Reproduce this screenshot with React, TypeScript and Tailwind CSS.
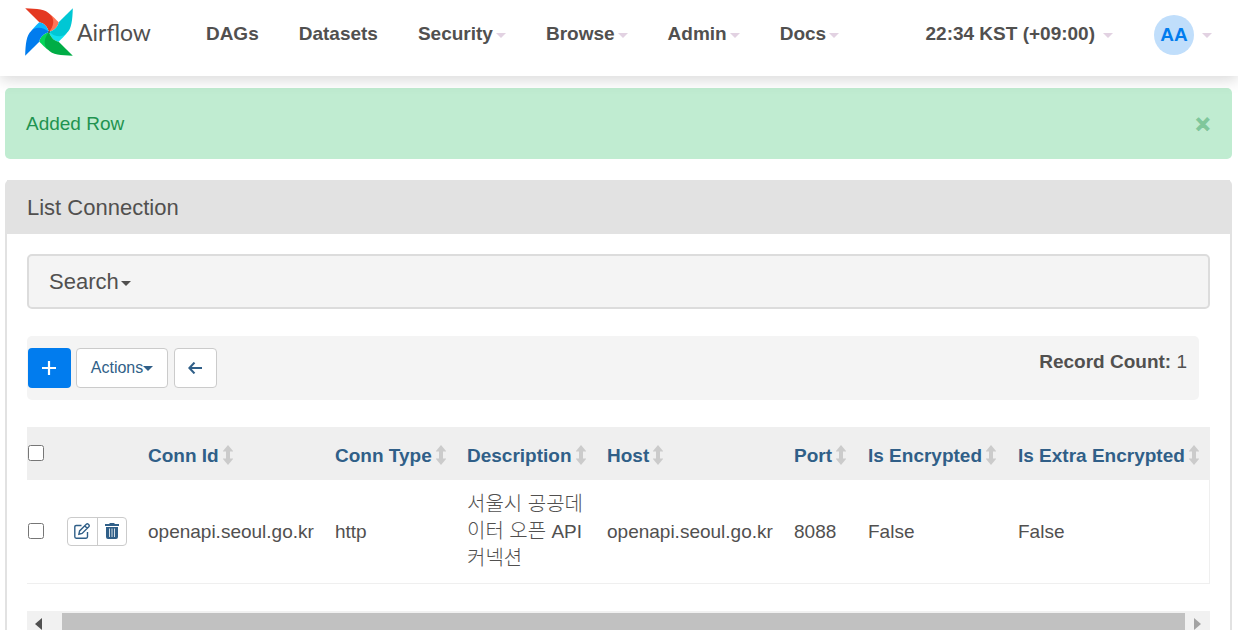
import type { ReactNode } from "react";

const navItems = [
  { label: "DAGs", menu: false },
  { label: "Datasets", menu: false },
  { label: "Security", menu: true },
  { label: "Browse", menu: true },
  { label: "Admin", menu: true },
  { label: "Docs", menu: true },
];

const columns = [
  "Conn Id",
  "Conn Type",
  "Description",
  "Host",
  "Port",
  "Is Encrypted",
  "Is Extra Encrypted",
];

const blades = [
  { angle: 0, main: "#e43921", light: "#ff7557" },
  { angle: 90, main: "#00c7d4", light: "#11e1ee" },
  { angle: 180, main: "#00ad46", light: "#04d659" },
  { angle: 270, main: "#017cee", light: "#0cb6ff" },
];

const Caret = ({ className = "" }: { className?: string }) => (
  <svg
    viewBox="0 0 10 5"
    className={`h-[5px] w-[10px] shrink-0 fill-current ${className}`}
    aria-hidden="true"
  >
    <path d="M0 0h10L5 5z" />
  </svg>
);

const Pinwheel = () => (
  <svg viewBox="-24 -24 48 48" className="size-12" aria-hidden="true">
    {blades.map((b) => (
      <g key={b.angle} transform={`rotate(${b.angle})`}>
        <path
          fill={b.light}
          d="M1-17.8C4-15.5 7-12.5 9.7-9.7C9-5 5-1.5 0 0C3-6 4-12 1-17.8Z"
        />
        <path
          fill={b.main}
          d="M-23.8-23.8C-12-23.5-3-22.5 1-17.8C6-13 5-6 0 0C-1.5-5-5-9-9.7-9.7Z"
        />
      </g>
    ))}
    <circle r="1" fill="#51504f" />
  </svg>
);

const SortIcon = () => (
  <svg
    viewBox="0 0 10 20"
    className="h-5 w-[10px] shrink-0 fill-[#cbcbcb]"
    aria-hidden="true"
  >
    <path d="M5 0l5.4 6.4H7v7.2h3.4L5 20l-5.4-6.4H3V6.4H-.4z" />
  </svg>
);

const PlusIcon = () => (
  <svg viewBox="0 0 14 14" className="size-[14px]" aria-hidden="true">
    <path d="M7 0v14M0 7h14" stroke="currentColor" strokeWidth="2.2" />
  </svg>
);

const BackIcon = () => (
  <svg viewBox="0 0 14 12" className="h-3 w-[14px]" aria-hidden="true">
    <path
      d="M6.5.6L1.4 6l5.1 5.4M1.4 6H14"
      fill="none"
      stroke="currentColor"
      strokeWidth="2.1"
    />
  </svg>
);

const EditIcon = () => (
  <svg viewBox="0 0 16 16" className="size-4" aria-hidden="true">
    <g fill="none" stroke="currentColor" strokeWidth="1.4">
      <path d="M7.5 2.5H2.2Q.8 2.5.8 3.9v9.9q0 1.4 1.4 1.4h9.9q1.4 0 1.4-1.4V9" />
      <path d="M4.9 11.2l.7-3.3 6.7-6.7q1-.9 2 0l.5.5q.9 1 0 2L8.1 10.4zM10.7 2.8l2.5 2.5" />
    </g>
  </svg>
);

const TrashIcon = () => (
  <svg viewBox="0 0 14 16" className="h-4 w-[14px]" aria-hidden="true">
    <path
      fill="currentColor"
      d="M0 1h4.5V0h5v1H14v2H0zM1 4h12v10q0 2-2 2H3q-2 0-2-2z"
    />
    <path
      d="M4.5 5.5v8.5M7 5.5v8.5M9.5 5.5v8.5"
      stroke="#fff"
      strokeWidth="0.8"
    />
  </svg>
);

const Cell = ({ children }: { children: ReactNode }) => (
  <td className="px-[10px] align-middle whitespace-nowrap">{children}</td>
);

const Navbar = () => (
  <header className="relative z-10 flex h-[76px] shrink-0 items-start bg-white pr-[26px] pl-[25px] font-bold shadow-[0_4px_14px_rgba(0,0,0,0.15)]">
    <a href="#home" className="flex items-center pt-2">
      <Pinwheel />
      <span className="pl-1 font-[Lato] text-[23px] leading-12 font-normal">
        Airflow
      </span>
    </a>
    <nav className="flex gap-10 pt-5 pl-[55px] leading-[27px]">
      {navItems.map((item) => (
        <a key={item.label} href="#nav" className="flex items-center">
          {item.label}
          {item.menu && <Caret className="mt-1 ml-[3px] text-[#e2d2e2]" />}
        </a>
      ))}
    </nav>
    <div className="ml-auto flex items-start gap-[41px]">
      <button className="flex items-center pt-5 leading-[27px]">
        22:34 KST (+09:00)
        <Caret className="mt-1 ml-2 text-[#e2d2e2]" />
      </button>
      <button className="flex items-center pt-[15px]">
        <span className="flex size-10 items-center justify-center rounded-full bg-[#c0defb] pb-[2px] text-[#017cee]">
          AA
        </span>
        <Caret className="ml-2 text-[#e2d2e2]" />
      </button>
    </div>
  </header>
);

const Toolbar = () => (
  <div className="mt-[27px] mr-[11px] flex h-16 items-start justify-between rounded-[5px] bg-[#f4f4f4] py-3 pr-3 pl-px">
    <div className="flex gap-[5px] text-base text-[#305f88]">
      <button
        aria-label="Add a new record"
        className="flex h-10 w-[43px] items-center justify-center rounded-[4px] bg-[#017cee] pr-px text-white"
      >
        <PlusIcon />
      </button>
      <button className="flex h-10 w-[92px] items-center justify-center rounded-[4px] border border-[#cbcbcb] bg-white">
        Actions
        <Caret />
      </button>
      <button
        aria-label="Back"
        className="ml-px flex h-10 w-[43px] items-center justify-center rounded-[4px] border border-[#cbcbcb] bg-white pr-px"
      >
        <BackIcon />
      </button>
    </div>
    <p className="leading-[27px]">
      <strong>Record Count:</strong> 1
    </p>
  </div>
);

const ConnectionTable = () => (
  <table className="mt-[27px] w-full table-fixed border-r border-b border-[#efefef]">
    <colgroup>
      <col className="w-[30px]" />
      <col className="w-[81px]" />
      <col className="w-[187px]" />
      <col className="w-[132px]" />
      <col className="w-[140px]" />
      <col className="w-[187px]" />
      <col className="w-[74px]" />
      <col className="w-[150px]" />
      <col />
    </colgroup>
    <thead>
      <tr className="h-[53px] bg-[#efefef] text-left text-[#305f88]">
        <th className="pb-[2px] pl-px">
          <input
            type="checkbox"
            aria-label="Select all rows"
            className="block size-4"
          />
        </th>
        <th aria-label="Row actions" />
        {columns.map((name) => (
          <th key={name} className="px-[10px] pt-[3px] whitespace-nowrap">
            <a href="#sort" className="flex items-center gap-1">
              {name}
              <SortIcon />
            </a>
          </th>
        ))}
      </tr>
    </thead>
    <tbody>
      <tr className="h-[103px]">
        <td className="pl-px">
          <input
            type="checkbox"
            aria-label="Select openapi.seoul.go.kr"
            className="block size-4"
          />
        </td>
        <td className="pl-[10px]">
          <div className="flex w-[60px] rounded-[4px] border border-[#cbcbcb] bg-white text-[#305f88]">
            <button
              aria-label="Edit record"
              className="flex h-[27px] flex-1 items-center justify-center border-r border-[#cbcbcb]"
            >
              <EditIcon />
            </button>
            <button
              aria-label="Delete record"
              className="flex h-[27px] flex-1 items-center justify-center"
            >
              <TrashIcon />
            </button>
          </div>
        </td>
        <Cell>openapi.seoul.go.kr</Cell>
        <Cell>http</Cell>
        <Cell>
          <span className="text-[20px] font-light">서울시 공공데</span>
          <br />
          <span className="text-[20px] font-light">이터 오픈</span> API
          <br />
          <span className="text-[20px] font-light">커넥션</span>
        </Cell>
        <Cell>openapi.seoul.go.kr</Cell>
        <Cell>8088</Cell>
        <Cell>False</Cell>
        <Cell>False</Cell>
      </tr>
    </tbody>
  </table>
);

const ScrollBar = () => (
  <div className="mt-[27px] flex h-[26px] items-stretch bg-[#f1f1f1]">
    <button
      aria-label="Scroll left"
      className="flex w-[35px] items-center pl-2 text-[#505050]"
    >
      <svg viewBox="0 0 7 12" className="h-3 w-[7px] fill-current">
        <path d="M7 0v12L0 6z" />
      </svg>
    </button>
    <div className="mt-[2px] flex-1 bg-[#c1c1c1]" />
    <button
      aria-label="Scroll right"
      className="flex w-[25px] items-center justify-center text-[#a3a3a3]"
    >
      <svg viewBox="0 0 7 12" className="h-3 w-[7px] fill-current">
        <path d="M0 0v12l7-6z" />
      </svg>
    </button>
  </div>
);

export default function App() {
  return (
    <div className="flex h-screen flex-col overflow-hidden bg-white font-['Liberation_Sans','Noto_Sans_CJK_KR',sans-serif] text-[19px] leading-[27px] text-[#51504f]">
      <Navbar />
      <main className="flex min-h-0 flex-1 flex-col pt-3 pr-[6px] pl-[5px]">
        <div
          role="alert"
          className="flex h-[71px] shrink-0 items-center justify-between rounded-[5px] bg-[#c0ecd1] pr-[22px] pl-[21px] text-[#1f9350]"
        >
          Added Row
          <button
            aria-label="Close"
            className="pt-[2px] text-[25px] font-bold text-[#7fc79b] [-webkit-text-stroke:1px_#7fc79b] [text-shadow:0_1px_0_#e4f7eb]"
          >
            ×
          </button>
        </div>
        <section className="mt-[21px] flex-1 rounded-t-[5px] border-x-2 border-[#e2e2e2]">
          <h1 className="flex h-[54px] items-center bg-[#e2e2e2] px-5 text-[22px]">
            List Connection
          </h1>
          <div className="p-5">
            <button className="flex h-[55px] w-full items-center rounded-[5px] border-2 border-[#dcdcdc] bg-[#f4f4f4] px-5 text-[22px]">
              Search
              <Caret className="mt-1 ml-[2px]" />
            </button>
            <Toolbar />
            <ConnectionTable />
            <ScrollBar />
          </div>
        </section>
      </main>
    </div>
  );
}
